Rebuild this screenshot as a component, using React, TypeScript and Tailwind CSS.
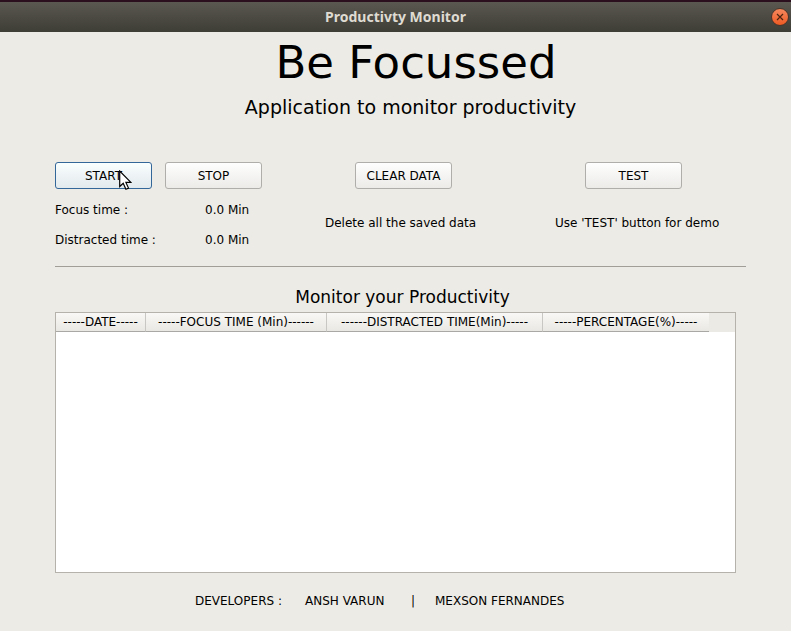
import type { ReactNode } from "react";

const buttonBase =
  "h-[27px] w-[97px] rounded-[3px] border text-xs leading-none bg-linear-to-b";

function PushButton({ children, active = false }: { children: ReactNode; active?: boolean }) {
  return (
    <button
      type="button"
      className={`${buttonBase} ${active ? "border-[#336699] from-[#f9fefe] to-[#e3eaed]" : "border-[#b0aeab] from-[#fefefe] to-[#ecebe8]"}`}
    >
      {children}
    </button>
  );
}

const columnHeader = "border-r border-b border-r-[#c9c7c3] border-b-[#a9a8a4] p-0 font-normal";

export default function App() {
  return (
    <div className="flex min-h-screen flex-col bg-[#edebe5] font-['DejaVu_Sans',sans-serif] text-xs text-black">
      <header className="grid h-8 grid-cols-[20px_1fr_20px] items-center border-t-2 border-[#2c0f1e] bg-linear-to-b from-[#5a5850] to-[#3e3d36]">
        <h1 className="col-start-2 text-center font-['Noto_Sans',sans-serif] text-sm leading-5 font-bold text-[#dfdbd2]">
          Productivty Monitor
        </h1>
        <button
          type="button"
          aria-label="Close"
          className="flex size-[18px] items-center justify-center rounded-full border border-[#4a352b] bg-linear-to-b from-[#f5875c] to-[#ee5a20]"
        >
          <svg viewBox="0 0 8 8" className="size-2" fill="none" stroke="#4b2412" strokeWidth="1.2">
            <path d="M1 1 7 7M7 1 1 7" />
          </svg>
        </button>
      </header>

      <main className="flex flex-1 flex-col pr-[45px] pl-[55px]">
        <div className="pl-5 text-center">
          <h2 className="pt-px pl-[11px] text-[45px] leading-[60px]">Be Focussed</h2>
          <p className="text-[19px] leading-7">Application to monitor productivity</p>
        </div>

        <section className="mt-[41px] grid grid-cols-[270px_230px_1fr]">
          <div>
            <div className="flex gap-[13px]">
              <div className="relative">
                <PushButton active>START</PushButton>
                <svg viewBox="0 0 13 20" className="absolute top-2 left-16 h-5 w-[13px]" fill="#fff" stroke="#000" strokeWidth="1.2">
                  <path d="M.7 1v15.500l3.500-3.300 2.700 6 2.600-1.100-2.600-5.700h5z" />
                </svg>
              </div>
              <PushButton>STOP</PushButton>
            </div>
            <dl className="mt-[6px] grid grid-cols-[150px_1fr] leading-[30px]">
              <dt>Focus time :</dt>
              <dd>0.0 Min</dd>
              <dt>Distracted time :</dt>
              <dd>0.0 Min</dd>
            </dl>
          </div>
          <div>
            <div className="pl-[30px]">
              <PushButton>CLEAR DATA</PushButton>
            </div>
            <p className="mt-[26px]">Delete all the saved data</p>
          </div>
          <div>
            <div className="pl-[30px]">
              <PushButton>TEST</PushButton>
            </div>
            <p className="mt-[26px]">Use 'TEST' button for demo</p>
          </div>
        </section>

        <hr className="mt-[11px] border-[#a09e97]" />

        <section className="mt-4 mr-[10px] flex flex-1 flex-col">
          <h3 className="mb-px pl-[14px] text-center text-[17px] leading-7">Monitor your Productivity</h3>
          <div className="flex-1 border border-[#b4b2ab] bg-white">
            <div className="bg-[#ebeae4]">
              <table className="w-[653px] table-fixed border-separate border-spacing-0">
                <thead>
                  <tr className="h-[19px] bg-linear-to-b from-[#f9f8f6] to-[#e9e7e2] whitespace-nowrap">
                    <th className={`${columnHeader} w-[90px]`}>-----DATE-----</th>
                    <th className={`${columnHeader} w-[181px]`}>-----FOCUS TIME (Min)------</th>
                    <th className={`${columnHeader} w-[216px]`}>------DISTRACTED TIME(Min)-----</th>
                    <th className="border-b border-[#a9a8a4] p-0 font-normal">-----PERCENTAGE(%)-----</th>
                  </tr>
                </thead>
              </table>
            </div>
          </div>
        </section>
      </main>

      <footer className="flex h-[58px] items-center pb-0.5 pl-[195px]">
        <span className="w-[110px]">DEVELOPERS :</span>
        <span className="w-[106px]">ANSH VARUN</span>
        <span className="w-6">|</span>
        <span>MEXSON FERNANDES</span>
      </footer>
    </div>
  );
}
